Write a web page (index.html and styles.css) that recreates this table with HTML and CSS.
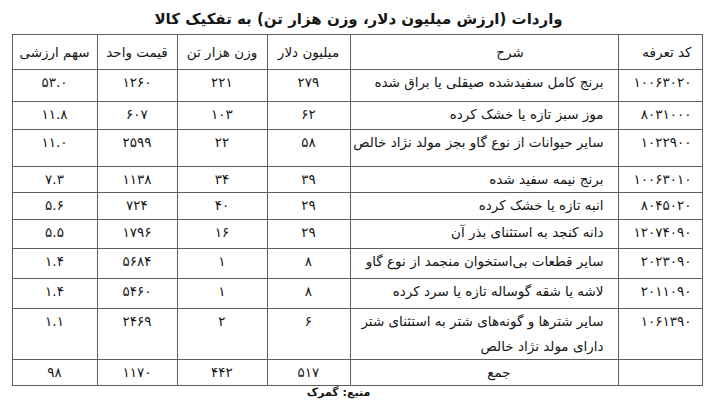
FILE: index.html
```html
<!DOCTYPE html>
<html lang="fa" dir="rtl">
<head>
<meta charset="utf-8">
<link rel="stylesheet" href="styles.css">
</head>
<body>
<div class="page">
  <h1 class="title">واردات (ارزش میلیون دلار، وزن هزار تن) به تفکیک کالا</h1>
  <table class="data">
    <colgroup>
      <col class="c-code"><col class="c-desc"><col class="c-val"><col class="c-wt"><col class="c-price"><col class="c-share">
    </colgroup>
    <thead>
      <tr>
        <th class="code">کد تعرفه</th>
        <th class="desc">شرح</th>
        <th>میلیون دلار</th>
        <th>وزن هزار تن</th>
        <th>قیمت واحد</th>
        <th>سهم ارزشی</th>
      </tr>
    </thead>
    <tbody>
      <tr><td class="code">۱۰۰۶۳۰۲۰</td><td class="desc">برنج کامل سفیدشده صیقلی یا براق شده</td><td>۲۷۹</td><td>۲۲۱</td><td>۱۲۶۰</td><td>۵۳.۰</td></tr>
      <tr><td class="code">۸۰۳۱۰۰۰</td><td class="desc">موز سبز تازه یا خشک کرده</td><td>۶۲</td><td>۱۰۳</td><td>۶۰۷</td><td>۱۱.۸</td></tr>
      <tr><td class="code">۱۰۲۲۹۰۰</td><td class="desc">سایر حیوانات از نوع گاو بجز مولد نژاد خالص</td><td>۵۸</td><td>۲۲</td><td>۲۵۹۹</td><td>۱۱.۰</td></tr>
      <tr><td class="code">۱۰۰۶۳۰۱۰</td><td class="desc">برنج نیمه سفید شده</td><td>۳۹</td><td>۳۴</td><td>۱۱۳۸</td><td>۷.۳</td></tr>
      <tr><td class="code">۸۰۴۵۰۲۰</td><td class="desc">انبه تازه یا خشک کرده</td><td>۲۹</td><td>۴۰</td><td>۷۲۴</td><td>۵.۶</td></tr>
      <tr><td class="code">۱۲۰۷۴۰۹۰</td><td class="desc">دانه کنجد به استثنای بذر آن</td><td>۲۹</td><td>۱۶</td><td>۱۷۹۶</td><td>۵.۵</td></tr>
      <tr><td class="code">۲۰۲۳۰۹۰</td><td class="desc">سایر قطعات بی‌استخوان منجمد از نوع گاو</td><td>۸</td><td>۱</td><td>۵۶۸۴</td><td>۱.۴</td></tr>
      <tr><td class="code">۲۰۱۱۰۹۰</td><td class="desc">لاشه یا شقه گوساله تازه یا سرد کرده</td><td>۸</td><td>۱</td><td>۵۴۶۰</td><td>۱.۴</td></tr>
      <tr><td class="code">۱۰۶۱۳۹۰</td><td class="desc">سایر شترها و گونه‌های شتر به استثنای شتر<br>دارای مولد نژاد خالص</td><td>۶</td><td>۲</td><td>۲۴۶۹</td><td>۱.۱</td></tr>
      <tr class="total"><td class="code"></td><td class="desc-total">جمع</td><td>۵۱۷</td><td>۴۴۲</td><td>۱۱۷۰</td><td>۹۸</td></tr>
    </tbody>
  </table>
  <p class="source">منبع: گمرک</p>
</div>
</body>
</html>
```

FILE: styles.css
```css
html, body {
  margin: 0;
  padding: 0;
  background: #ffffff;
}

body {
  font-family: "DejaVu Sans", sans-serif;
  color: #161616;
}

.page {
  width: 707px;
  padding-top: 6px;
  display: flex;
  flex-direction: column;
  align-items: center;
}

.title {
  margin: 0;
  font-size: 15px;
  font-weight: bold;
  line-height: 26px;
  height: 28px;
  padding-left: 10px;
}

.data {
  width: 690px;
  margin-left: 7px;
  border-collapse: collapse;
  table-layout: fixed;
  font-size: 13.5px;
}

.c-code { width: 84px; }
.c-desc { width: 268px; }
.c-val { width: 83px; }
.c-wt { width: 90px; }
.c-price { width: 80px; }
.c-share { width: 85px; }

.data th,
.data td {
  border: 1px solid #5e5e5e;
  padding: 0;
  text-align: center;
  line-height: 25px;
  vertical-align: top;
  font-weight: normal;
  white-space: nowrap;
}

.data th {
  height: 34px;
  vertical-align: middle;
}

.data .code {
  text-align: right;
  padding-right: 10px;
}

.data th.desc {
  text-align: center;
  padding-left: 52px;
}

.data td.desc {
  text-align: right;
  padding-right: 14px;
}

.data td.desc-total {
  text-align: center;
  padding-left: 30px;
}

.data tbody tr:nth-child(1) td { height: 31px; }
.data tbody tr:nth-child(2) td { height: 27px; }
.data tbody tr:nth-child(3) td { height: 36px; }
.data tbody tr:nth-child(4) td { height: 24px; }
.data tbody tr:nth-child(5) td { height: 26px; }
.data tbody tr:nth-child(6) td { height: 28px; }
.data tbody tr:nth-child(7) td { height: 29px; }
.data tbody tr:nth-child(8) td { height: 29px; }
.data tbody tr:nth-child(9) td { height: 49px; }
.data tbody tr:nth-child(10) td { height: 24px; }

.source {
  margin: 0;
  font-size: 11px;
  font-weight: bold;
  line-height: 14px;
  padding-right: 30px;
}
```
